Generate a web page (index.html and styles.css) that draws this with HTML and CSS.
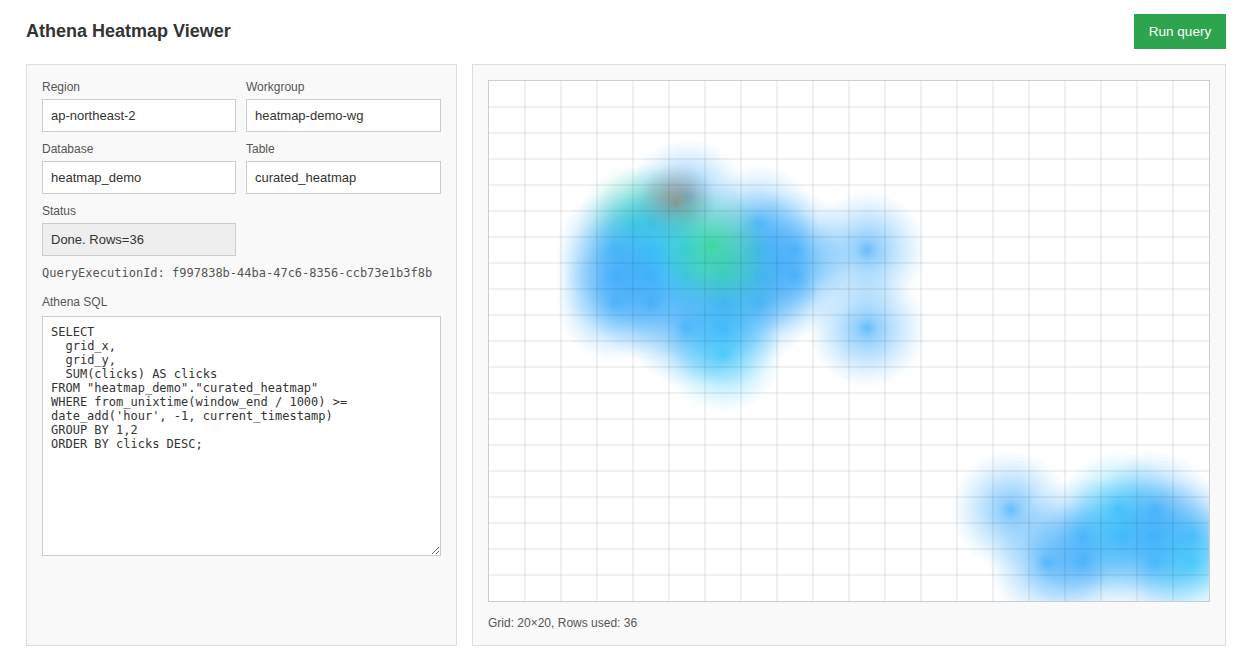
FILE: index.html
```html
<!DOCTYPE html>
<html>
<head>
    <title>Athena Heatmap Viewer</title>
    <link rel="stylesheet" href="styles.css">
</head>
<body>
    <div class="header">
        <h1>Athena Heatmap Viewer</h1>
        <button class="run-btn">Run query</button>
    </div>

    <div class="container">
        <div class="panel">
            <div class="form-grid">
                <div class="field">
                    <label>Region</label>
                    <input type="text" value="ap-northeast-2">
                </div>
                <div class="field">
                    <label>Workgroup</label>
                    <input type="text" value="heatmap-demo-wg">
                </div>
                <div class="field">
                    <label>Database</label>
                    <input type="text" value="heatmap_demo">
                </div>
                <div class="field">
                    <label>Table</label>
                    <input type="text" value="curated_heatmap">
                </div>
                <div class="field">
                    <label>Status</label>
                    <input type="text" class="status" value="Done. Rows=36" readonly>
                </div>
            </div>
            <div class="query-id">QueryExecutionId: f997838b-44ba-47c6-8356-ccb73e1b3f8b</div>
            <label class="sql-label">Athena SQL</label>
            <textarea class="sql" spellcheck="false">SELECT
  grid_x,
  grid_y,
  SUM(clicks) AS clicks
FROM "heatmap_demo"."curated_heatmap"
WHERE from_unixtime(window_end / 1000) >= date_add('hour', -1, current_timestamp)
GROUP BY 1,2
ORDER BY clicks DESC;</textarea>
        </div>

        <div class="panel">
            <canvas id="heatmap" width="720" height="520"></canvas>
            <div class="caption">Grid: 20×20, Rows used: 36</div>
        </div>
    </div>

    <script src="app.js"></script>
</body>
</html>
```

FILE: styles.css
```css
* {
    box-sizing: border-box;
}
body {
    font-family: "Liberation Sans", Arial, sans-serif;
    margin: 0;
    padding: 14px 30px 14px 26px;
    background: #fff;
    color: #333;
}
.header {
    display: flex;
    justify-content: space-between;
    align-items: center;
    margin-bottom: 15px;
}
.header h1 {
    font-size: 18px;
    margin: 0;
}
.run-btn {
    width: 92px;
    height: 35px;
    padding: 0;
    border: none;
    background: #2ea44f;
    color: #fff;
    font-family: inherit;
    font-size: 13.5px;
}
.container {
    display: grid;
    grid-template-columns: 431px 754px;
    gap: 15px;
}
.panel {
    background: #f9f9f9;
    border: 1px solid #ddd;
    padding: 15px;
}
.form-grid {
    display: grid;
    grid-template-columns: 194px 195px;
    gap: 10px;
}
label {
    display: block;
    font-size: 12px;
    line-height: 14px;
    color: #555;
    margin-bottom: 5px;
}
input {
    display: block;
    width: 100%;
    height: 33px;
    padding: 8px;
    border: 1px solid #ccc;
    background: #fff;
    color: #333;
    font-family: inherit;
    font-size: 13px;
}
input.status {
    background: #eee;
}
.query-id {
    margin-top: 10px;
    font-family: "DejaVu Sans Mono", monospace;
    font-size: 12px;
    line-height: 14px;
    color: #555;
    white-space: nowrap;
}
.sql-label {
    margin-top: 15px;
    margin-bottom: 7px;
}
.sql {
    display: block;
    width: 100%;
    height: 240px;
    padding: 8px;
    border: 1px solid #ccc;
    background: #fff;
    color: #333;
    font-family: "DejaVu Sans Mono", monospace;
    font-size: 12px;
    line-height: 14px;
    resize: vertical;
}
#heatmap {
    display: block;
    width: 722px;
    height: 522px;
    border: 1px solid #ccc;
    background: #fff;
}
.caption {
    margin-top: 14px;
    font-size: 12px;
    line-height: 14px;
    color: #555;
}
```

FILE: app.js
```js
const CELL_W = 36;
const CELL_H = 26;
const RADIUS = 60;

const BLUE = '60,170,250';
const CYAN = '50,200,250';
const TEAL = '50,205,190';
const GREEN = '50,215,140';
const RED = '165,125,90';

// grid_x, grid_y, colour, radius - painted in row order
const rows = [
    [3.6, 5, TEAL], [4, 5, TEAL], [5, 4, BLUE],
    [4.7, 4.2, RED, 40],
    [7, 5, BLUE],
    [3, 6, BLUE], [4, 6, CYAN], [5, 6, CYAN], [7, 6, BLUE], [8, 6, BLUE], [10, 6, BLUE],
    [3, 7, BLUE], [4, 7, BLUE], [5, 7, CYAN], [7, 7, BLUE], [8, 7, BLUE],
    [3, 8, BLUE], [4, 8, BLUE], [6, 8, BLUE], [7, 8, BLUE],
    [6, 7, TEAL], [5.7, 5.8, GREEN],
    [5, 9, BLUE], [6, 9, BLUE], [10, 9, BLUE],
    [6, 10, CYAN],
    [14, 16, BLUE], [17, 16, CYAN], [18, 16, BLUE],
    [16, 17, BLUE], [17, 17, CYAN], [18, 17, BLUE], [19, 17, BLUE],
    [15, 18, BLUE], [16, 18, BLUE], [18, 18, BLUE], [19, 18, CYAN]
];

const canvas = document.getElementById('heatmap');
const ctx = canvas.getContext('2d');

rows.forEach(([gx, gy, colour, r = RADIUS]) => {
    const x = (gx + 0.5) * CELL_W;
    const y = (gy + 0.5) * CELL_H;
    const grad = ctx.createRadialGradient(x, y, 0, x, y, r);
    grad.addColorStop(0, `rgba(${colour},0.78)`);
    grad.addColorStop(0.18, `rgba(${colour},0.54)`);
    grad.addColorStop(0.36, `rgba(${colour},0.41)`);
    grad.addColorStop(0.54, `rgba(${colour},0.28)`);
    grad.addColorStop(0.71, `rgba(${colour},0.16)`);
    grad.addColorStop(0.89, `rgba(${colour},0.05)`);
    grad.addColorStop(1, `rgba(${colour},0)`);
    ctx.fillStyle = grad;
    ctx.fillRect(x - r, y - r, r * 2, r * 2);
});

// Grid lines on top of the heat
ctx.strokeStyle = 'rgba(0,0,0,0.12)';
ctx.lineWidth = 1;
ctx.beginPath();
for (let i = 1; i < 20; i++) {
    ctx.moveTo(i * CELL_W, 0);
    ctx.lineTo(i * CELL_W, canvas.height);
    ctx.moveTo(0, i * CELL_H);
    ctx.lineTo(canvas.width, i * CELL_H);
}
ctx.stroke();
```
